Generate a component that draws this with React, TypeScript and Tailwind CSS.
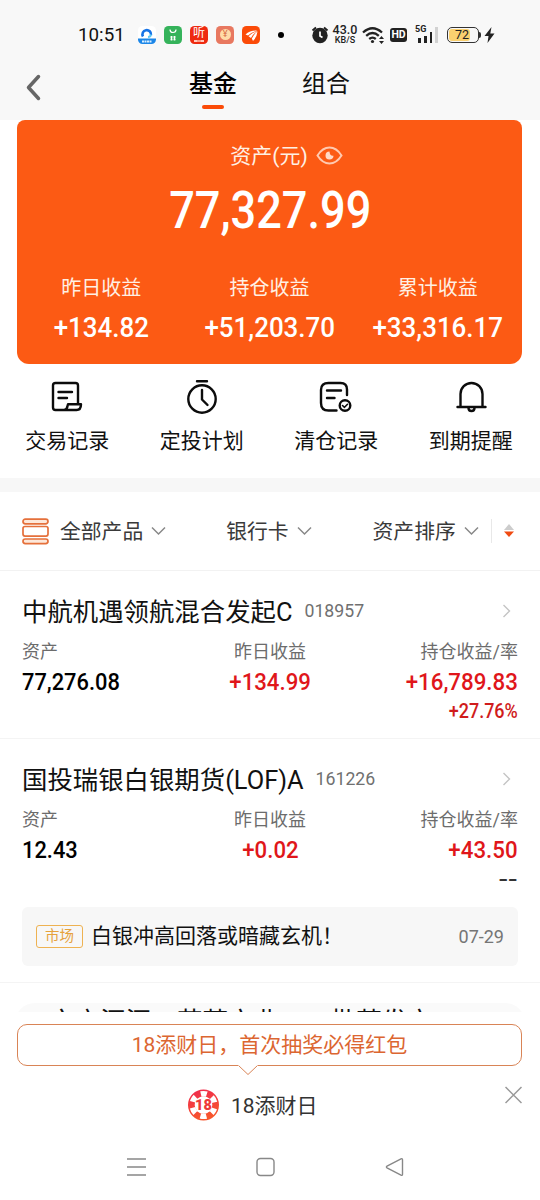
import type { ReactNode } from "react";
import clsx from "clsx";

const summary = [
  { label: "昨日收益", value: "+134.82" },
  { label: "持仓收益", value: "+51,203.70" },
  { label: "累计收益", value: "+33,316.17" },
];

const funds = [
  {
    name: "中航机遇领航混合发起C",
    code: "018957",
    asset: "77,276.08",
    yesterday: "+134.99",
    profit: "+16,789.83",
    rate: "+27.76%",
  },
  {
    name: "国投瑞银白银期货(LOF)A",
    code: "161226",
    asset: "12.43",
    yesterday: "+0.02",
    profit: "+43.50",
    rate: "--",
    news: { tag: "市场", title: "白银冲高回落或暗藏玄机！", date: "07-29" },
  },
];

// condensed figures, the layout box keeps its natural width
function Num({ children, className }: { children: ReactNode; className?: string }) {
  return (
    <span className={clsx("inline-block whitespace-nowrap font-medium", className)}>
      {children}
    </span>
  );
}

function AppIcons() {
  return (
    <div className="flex gap-2">
      <svg width="18" height="18" viewBox="0 0 18 18">
        <rect width="18" height="18" rx="4.5" fill="#fff" />
        <path d="M0 12.5h18v1a4.5 4.5 0 0 1-4.5 4.5h-9A4.5 4.5 0 0 1 0 13.500z" fill="#1b86e8" />
        <path d="M5 10.500A4.300 4.300 0 1 1 13 9" fill="none" stroke="#1673e6" strokeWidth="2.600" />
        <path d="M13 8.500q-.5 2.500-3 2.500" fill="none" stroke="#5cc9f5" strokeWidth="2" />
        <path d="M4 15.500h10" stroke="#d8eeff" strokeWidth="1.800" strokeDasharray="2 .5" />
      </svg>
      <svg width="18" height="18" viewBox="0 0 18 18">
        <rect width="18" height="18" rx="4.500" fill="#35b35b" />
        <path d="M6 3.500q0 3 3 3t3-3" fill="none" stroke="#fff" strokeWidth="1.200" />
        <path d="M7.500 10v4.500M10.500 10v4.500M6.500 11h2M9.500 11h2M6.500 13.500h2M9.500 13.500h2" stroke="#fff" strokeWidth="1.400" />
      </svg>
      <div className="flex h-[18px] w-[18px] flex-col items-center rounded-[4.5px] bg-[#ee2a10] text-white">
        <span className="h-[14px] text-[12px] leading-[15px]">听</span>
        <span className="h-[2px] w-[10px] border-x-[3px] border-[#ffc9bd] bg-[#ff9c88]" />
      </div>
      <div className="flex h-[18px] w-[18px] items-center justify-center rounded-[4.5px] bg-[#e87860]">
        <span className="flex h-[11px] w-[11px] items-center justify-center rounded-full bg-[#ffdca8] text-[9px] text-[#d66b45]">
          ¥
        </span>
      </div>
      <svg width="18" height="18" viewBox="0 0 18 18">
        <rect width="18" height="18" rx="4.500" fill="#fb4b08" />
        <path d="M3.500 8.500Q8 4 15.500 4.500 9 6 6 9.500zM6.500 10.200Q10 6.500 15.500 5 11 8 9 12zM9.800 12.500Q11.500 8.500 15.500 5.500 15 11 11 15z" fill="#fff" />
      </svg>
    </div>
  );
}

function StatusBar() {
  return (
    <div className="flex h-[50px] items-center pt-[19px] pl-[78px]">
      <span className="w-[60px] text-[18.8px] leading-8 text-[#111]">10:51</span>
      <AppIcons />
      <span className="ml-[18px] h-[6px] w-[6px] rounded-full bg-black" />
      <svg className="ml-[27px]" width="18" height="19" viewBox="0 0 18 19">
        <circle cx="9" cy="10.500" r="7.700" fill="#222" />
        <path d="M1.500 5.500 5 2.500M16.500 5.500 13 2.500" stroke="#222" strokeWidth="2" />
        <path d="M9 6.500V11l2.500 1.500" fill="none" stroke="#fff" strokeWidth="1.700" />
      </svg>
      <div className="ml-[3px] flex w-[26px] flex-col items-center font-medium text-[#222]">
        <span className="text-[12.5px] leading-[10px]">43.0</span>
        <span className="mt-px text-[9px] leading-[9px]">KB/S</span>
      </div>
      <svg className="ml-1" width="23" height="18" viewBox="0 0 23 18">
        <g fill="none" stroke="#222" strokeWidth="2.300">
          <path d="M1 6.500q9.500-8.500 19 0" />
          <path d="M4.200 9.800q6.300-5.600 12.600 0" />
          <path d="M7.200 13q3.300-2.800 6.600 0" />
        </g>
        <circle cx="10.500" cy="15.500" r="1.600" fill="#222" />
        <path d="m19.500 10 2.500 3h-5zM19.500 18l2.500-3h-5z" fill="#222" />
      </svg>
      <span className="ml-[5px] flex h-[14px] w-[17px] items-center justify-center rounded-[3px] bg-[#222] text-[10.5px] font-bold text-white">
        HD
      </span>
      <div className="relative ml-[9px] flex h-[16px] w-[22px] items-end gap-[3px]">
        <span className="absolute -top-[2px] -left-px text-[9px] leading-[9px] font-bold text-[#222]">5G</span>
        <span className="ml-[2px] h-[5px] w-[3px] bg-[#222]" />
        <span className="h-[7px] w-[3px] bg-[#222]" />
        <span className="h-[11px] w-[3px] bg-[#222]" />
        <span className="h-[16px] w-[3px] bg-[#d2d2d2]" />
      </div>
      <div className="ml-[9px] flex items-center">
        <div className="flex h-[16px] w-[32px] items-center rounded-[5px] border-[1.5px] border-[#333] p-px">
          <span className="h-full w-[21px] rounded-[3px] bg-[#fad06f]" />
          <span className="-ml-[15px] text-[12.5px] leading-[12px] text-[#222]">72</span>
        </div>
        <span className="h-[6px] w-[2px] rounded-r bg-[#333]" />
      </div>
      <svg className="ml-[3px]" width="11" height="16" viewBox="0 0 11 16">
        <path d="M7.500 0 .5 9h4L3.500 16l7-9.500H6.300z" fill="#222" />
      </svg>
    </div>
  );
}

function TopTabs() {
  return (
    <div className="flex h-[70px] pl-[26px]">
      <svg className="mt-6" width="16" height="27" viewBox="0 0 16 27">
        <path d="M12.500 2.500 2.500 13.500l10 11" fill="none" stroke="#666" strokeWidth="3.500" strokeLinecap="round" strokeLinejoin="round" />
      </svg>
      <div className="ml-[147px] flex w-12 flex-col items-center text-2xl font-medium text-black">
        <span className="mt-[18px] leading-8">基金</span>
        <span className="mt-[5px] h-1 w-[22px] rounded-full bg-[#fb4b08]" />
      </div>
      <span className="mt-[18px] ml-[65px] text-2xl leading-8 text-[#111]">组合</span>
    </div>
  );
}

function AssetCard() {
  return (
    <div className="mx-[17px] mr-[18px] h-[244px] rounded-t-lg rounded-b-xl bg-[#fc5a14] text-white">
      <div className="flex items-center justify-center pt-[22px] pl-[34px]">
        <span className="text-[21px] leading-7 text-[#fff0e4]">资产(元)</span>
        <svg className="mb-px ml-2" width="27" height="19" viewBox="0 0 27 19">
          <path d="M1.500 9.500Q6.500 1.500 13.500 1.500t12 8q-5 8-12 8t-12-8z" fill="none" stroke="#ffc9b0" strokeWidth="2" />
          <path d="M13.500 5.500a4 4 0 1 0 4 4.200q-3.800.4-4-4.200z" fill="#ffd9c7" />
        </svg>
      </div>
      <div className="mt-[10px] flex justify-center pl-px">
        <Num className="scale-x-[.885] text-[51px] leading-[62px]">77,327.99</Num>
      </div>
      <div className="mt-[32px] grid grid-cols-3">
        {summary.map((item) => (
          <div key={item.label} className="flex flex-col items-center">
            <span className="text-xl leading-7 text-[#fff0e4]">{item.label}</span>
            <Num className="mt-[10px] scale-x-[.91] text-[28.5px] leading-8">{item.value}</Num>
          </div>
        ))}
      </div>
    </div>
  );
}

const actions = [
  {
    label: "交易记录",
    icon: (
      <>
        <path d="M28 24V5.500Q28 3 25.500 3h-20Q3 3 3 5.500v22Q3 30 5.500 30H14q3 0 3.500-4l.5-1.800h13Q31 30 26.500 30H13" />
        <path d="M8.500 12H22M8.500 18H17" />
      </>
    ),
  },
  {
    label: "定投计划",
    icon: (
      <>
        <circle cx="17" cy="19" r="13.700" />
        <path d="M12 1.200h10M17 10v9.500l5.500 5.500" />
      </>
    ),
  },
  {
    label: "清仓记录",
    icon: (
      <>
        <path d="M28 15V9.500Q28 3 21.500 3h-12Q2 3 2 10v13q0 7.500 7.500 7.500h8" />
        <path d="M8 10.500h14M8 18h7.500" />
        <circle cx="26" cy="25.500" r="5.300" />
        <path d="m23.500 25.500 2 1.800 3-3" strokeWidth="1.600" />
      </>
    ),
  },
  {
    label: "到期提醒",
    icon: (
      <>
        <path d="M6.500 27V14a11 11 0 0 1 22 0v13M3.500 27h28" />
        <path d="M14.500 28q0 3 3 3t3-3" />
      </>
    ),
  },
];

function QuickActions() {
  return (
    <div className="mr-[2px] grid h-[114px] grid-cols-4">
      {actions.map((action) => (
        <div key={action.label} className="flex flex-col items-center pt-4">
          <svg
            width="34"
            height="34"
            viewBox="0 0 34 34"
            fill="none"
            stroke="#0c0c0c"
            strokeWidth="2.400"
            strokeLinecap="round"
            strokeLinejoin="round"
          >
            {action.icon}
          </svg>
          <span className="mt-3 text-[21px] leading-[30px] text-[#111]">{action.label}</span>
        </div>
      ))}
    </div>
  );
}

function Chevron() {
  return (
    <svg className="ml-2" width="15" height="10" viewBox="0 0 15 10">
      <path d="m1 1.500 6.500 6.500L14 1.500" fill="none" stroke="#888" strokeWidth="1.500" />
    </svg>
  );
}

function FilterBar() {
  return (
    <div className="flex h-[79px] items-center border-b border-[#f2f2f2] pl-[22px] text-[20.8px] text-[#3a3a3a]">
      <svg width="27" height="27" viewBox="0 0 27 27" fill="#fde8da" stroke="#e5703b" strokeWidth="1.700">
        <rect x="1" y="1.200" width="25" height="4.600" rx="2.300" />
        <rect x="1" y="8.500" width="25" height="9.600" rx="2" fill="#fff" />
        <rect x="1" y="21" width="25" height="4.600" rx="2.300" />
      </svg>
      <span className="ml-[11px] pt-1">全部产品</span>
      <Chevron />
      <span className="ml-[60px] pt-1">银行卡</span>
      <Chevron />
      <span className="ml-[61px] pt-1">资产排序</span>
      <Chevron />
      <span className="ml-[12px] h-6 w-px bg-[#e8e8e8]" />
      <svg className="ml-[12px]" width="10" height="14" viewBox="0 0 10 14">
        <path d="m5 0 5 6H0z" fill="#ccc" />
        <path d="m5 13 5-5.500H0z" fill="#f04b12" />
      </svg>
    </div>
  );
}

type Fund = (typeof funds)[number];

function FundItem({ fund }: { fund: Fund }) {
  return (
    <div className="border-b border-[#f4f4f4] px-[22px] pt-[25px]">
      <div className="flex h-8 items-center">
        <span className="text-[25.4px] leading-8 text-[#111]">{fund.name}</span>
        <span className="mb-px ml-3 text-[17.7px] text-[#707070]">{fund.code}</span>
        <svg className="mr-[7px] mb-[2px] ml-auto" width="9" height="14" viewBox="0 0 9 14">
          <path d="m1.500 1 6 6-6 6" fill="none" stroke="#c4c4c4" strokeWidth="1.400" />
        </svg>
      </div>
      <div className="mt-[11px] grid grid-cols-3 text-[18px] leading-[26px] text-[#6c6c6c]">
        <span>资产</span>
        <span className="text-center">昨日收益</span>
        <span className="text-right">持仓收益/率</span>
      </div>
      <div className="mt-[2px] grid grid-cols-3 text-2xl leading-[30px] text-[#e0161a]">
        <div>
          <Num className="origin-left scale-x-[.91] text-black">{fund.asset}</Num>
        </div>
        <div className="text-center">
          <Num className="scale-x-[.925]">{fund.yesterday}</Num>
        </div>
        <div className="text-right">
          <Num className="origin-right scale-x-[.928]">{fund.profit}</Num>
        </div>
      </div>
      <div className="h-[41px] text-right text-xl leading-7">
        <Num className={clsx("origin-right", fund.rate === "--" ? "scale-x-[1.4] text-[#333]" : "scale-x-[.9] text-[#d01c1c]")}>
          {fund.rate}
        </Num>
      </div>
      {fund.news && (
        <div className="mt-px mb-4 flex h-[59px] items-center rounded-md bg-[#f7f7f7] px-[14px]">
          <span className="flex h-[23px] w-[47px] items-center justify-center rounded-[3px] border border-[#eeb252] pt-px text-[14.5px] text-[#e6a23c]">
            {fund.news.tag}
          </span>
          <span className="ml-2 pt-px text-[21px] text-[#111]">{fund.news.title}</span>
          <span className="ml-auto text-[18px] text-[#757575]">{fund.news.date}</span>
        </div>
      )}
    </div>
  );
}

function PromoBar() {
  return (
    <div className="h-[129px] bg-white px-[17px] pt-3">
      <div className="relative mr-px flex h-[42px] items-center justify-center rounded-[10px] border border-[#d98456] pt-px text-[21px] text-[#dc6631]">
        18添财日，首次抽奖必得红包
        <svg className="absolute top-[40px] left-[220px]" width="20" height="11" viewBox="0 0 20 11">
          <path d="M0 0h20v.500L10 10 0 .500z" fill="#fff" />
          <path d="m.5.500 9.500 9 9.500-9" fill="none" stroke="#d98456" />
        </svg>
      </div>
      <div className="flex h-[77px] pl-[171px]">
        <svg className="mt-[23px]" width="31" height="32" viewBox="0 0 31 32">
          <defs>
            <linearGradient id="chip" x1="0" y1="0" x2=".3" y2="1">
              <stop stopColor="#ef2850" />
              <stop offset="1" stopColor="#f8562c" />
            </linearGradient>
          </defs>
          <circle cx="15.500" cy="16" r="15.500" fill="url(#chip)" />
          <circle cx="15.500" cy="16" r="11.300" fill="none" stroke="#fff" strokeWidth="5.600" strokeDasharray="5.917 5.917" strokeDashoffset="2.958" transform="rotate(30 15.500 16)" />
          <circle cx="15.500" cy="16" r="8.800" fill="#fff" />
          <text x="15.500" y="21" textAnchor="middle" fontSize="14.500" fontWeight="900" fill="#ee3a38">
            18
          </text>
        </svg>
        <span className="mt-[25px] ml-3 text-[21px] leading-[30px] text-[#333]">18添财日</span>
        <svg className="mt-5 mr-px ml-auto" width="17" height="18" viewBox="0 0 17 18">
          <path d="m.5 1 16 16M16.500 1l-16 16" stroke="#999" strokeWidth="1.500" />
        </svg>
      </div>
    </div>
  );
}

function SystemNav() {
  return (
    <div className="flex h-[59px] justify-between pt-[16px] pr-[136px] pl-[127px]">
      <svg width="19" height="20" viewBox="0 0 19 20">
        <path d="M0 2h19M0 10h19M0 18h19" stroke="#888" strokeWidth="1.400" />
      </svg>
      <svg width="19" height="20" viewBox="0 0 19 20">
        <rect x="1" y="1.500" width="17" height="17" rx="3.500" fill="none" stroke="#888" strokeWidth="1.400" />
      </svg>
      <svg width="19" height="20" viewBox="0 0 19 20">
        <path d="M2 9.200 16 1.800q1.500-.6 1.500 1v14.400q0 1.600-1.500 1L2 10.800q-1.200-.8 0-1.600z" fill="none" stroke="#888" strokeWidth="1.400" />
      </svg>
    </div>
  );
}

export default function App() {
  return (
    <div className="flex h-[1200px] w-[540px] flex-col overflow-hidden bg-white font-[Roboto,'Noto_Sans_CJK_SC',sans-serif]">
      <header className="h-[120px] shrink-0 bg-[#f8f8f8]">
        <StatusBar />
        <TopTabs />
      </header>
      <main className="h-[892px] shrink-0 overflow-hidden">
        <AssetCard />
        <QuickActions />
        <div className="h-[14px] bg-[#f7f7f7]" />
        <FilterBar />
        {funds.map((fund) => (
          <FundItem key={fund.code} fund={fund} />
        ))}
        {/* next card, scrolled under the promo bar */}
        <div className="mx-[15px] mt-5 h-[60px] rounded-t-[20px] bg-[#fafafa] pt-[3px] pl-[34px] text-[25.6px] leading-8 text-[#111]">
          产方添添一花荐市业一一批荐发市
        </div>
      </main>
      <PromoBar />
      <SystemNav />
    </div>
  );
}
